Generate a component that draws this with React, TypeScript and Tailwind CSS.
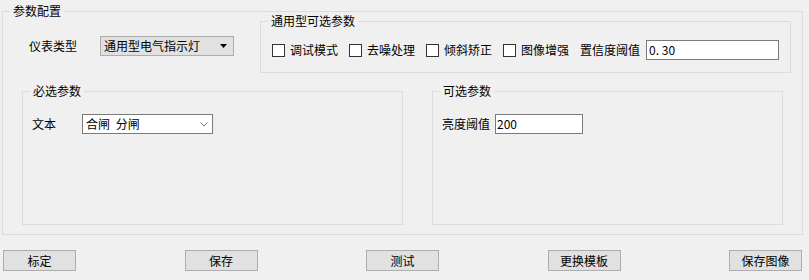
import type { ReactNode } from "react";
import clsx from "clsx";

// Caixa de grupo estilo WinForms: borda clara com o título por cima da linha.
function GroupBox({ title, className, children }: { title: string; className?: string; children?: ReactNode }) {
  return (
    <div className={clsx("relative border border-[#dcdcdc]", className)}>
      <span className="absolute left-[7px] top-[-8px] bg-[#f0f0f0] px-[3px] leading-[14px] whitespace-nowrap">
        {title}
      </span>
      {children}
    </div>
  );
}

function CheckBox({ label }: { label: string }) {
  return (
    <label className="flex items-center gap-[5px] mr-[11px]">
      <span className="w-[13px] h-[13px] border border-[#333333] bg-white" />
      <span className="leading-[14px]">{label}</span>
    </label>
  );
}

function TextBox({ value, className }: { value: string; className?: string }) {
  return (
    <div className={clsx("h-[20px] border border-[#7a7a7a] bg-white flex items-center leading-[14px]", className)}>
      {value}
    </div>
  );
}

function Button({ label }: { label: string }) {
  return (
    <button className="w-[73px] h-[21px] border border-[#adadad] bg-[#e1e1e1] flex items-center justify-center leading-[14px]">
      {label}
    </button>
  );
}

export default function App() {
  const botoes = ["标定", "保存", "测试", "更换模板", "保存图像"];

  return (
    <div className="w-[809px] h-[280px] bg-[#f0f0f0] pt-[11px] pl-[2px] text-[12px] text-black font-['Noto_Sans_CJK_SC','Noto_Sans',sans-serif]">
      <GroupBox title="参数配置" className="w-[801px] h-[224px] top-0">
        <div className="flex items-start pt-[9px]">
          <div className="w-[257px] flex items-center pt-[15px]">
            <span className="pl-[26px] w-[97px] leading-[14px]">仪表类型</span>
            <div className="w-[134px] h-[20px] border border-[#adadad] bg-[#e1e1e1] flex items-center justify-between pl-[3px] pr-[6px] leading-[14px]">
              <span>通用型电气指示灯</span>
              <svg width="7" height="4" viewBox="0 0 7 4">
                <path d="M0 0H7L3.5 4Z" fill="#000" />
              </svg>
            </div>
          </div>
          <GroupBox title="通用型可选参数" className="w-[531px] h-[52px] pt-[18px] pl-[11px]">
            <div className="flex items-center h-[20px]">
              <CheckBox label="调试模式" />
              <CheckBox label="去噪处理" />
              <CheckBox label="倾斜矫正" />
              <CheckBox label="图像增强" />
              <span className="leading-[14px] mr-[6px]">置信度阈值</span>
              <TextBox value="0. 30" className="w-[133px] pl-[2px]" />
            </div>
          </GroupBox>
        </div>

        <div className="flex mt-[18px] pl-[19px] gap-[29px]">
          <GroupBox title="必选参数" className="w-[381px] h-[134px] pt-[22px] pl-[9px]">
            <div className="flex items-center">
              <span className="w-[50px] leading-[14px]">文本</span>
              <div className="w-[131px] h-[20px] border border-[#7a7a7a] bg-white flex items-center justify-between pl-[3px] pr-[4px] leading-[14px]">
                <span className="[word-spacing:3px]">合闸 分闸</span>
                <svg width="8" height="5" viewBox="0 0 8 5">
                  <path d="M0.5 0.5L4 4L7.5 0.5" fill="none" stroke="#707070" strokeWidth="1" />
                </svg>
              </div>
            </div>
          </GroupBox>
          <GroupBox title="可选参数" className="w-[351px] h-[134px] pt-[22px] pl-[9px]">
            <div className="flex items-center gap-[5px]">
              <span className="leading-[14px]">亮度阈值</span>
              <TextBox value="200" className="w-[88px] pl-[1px]" />
            </div>
          </GroupBox>
        </div>
      </GroupBox>

      <div className="flex justify-between mt-[15px] pl-[1px] pr-[7px]">
        {botoes.map((b) => (
          <Button key={b} label={b} />
        ))}
      </div>
    </div>
  );
}
